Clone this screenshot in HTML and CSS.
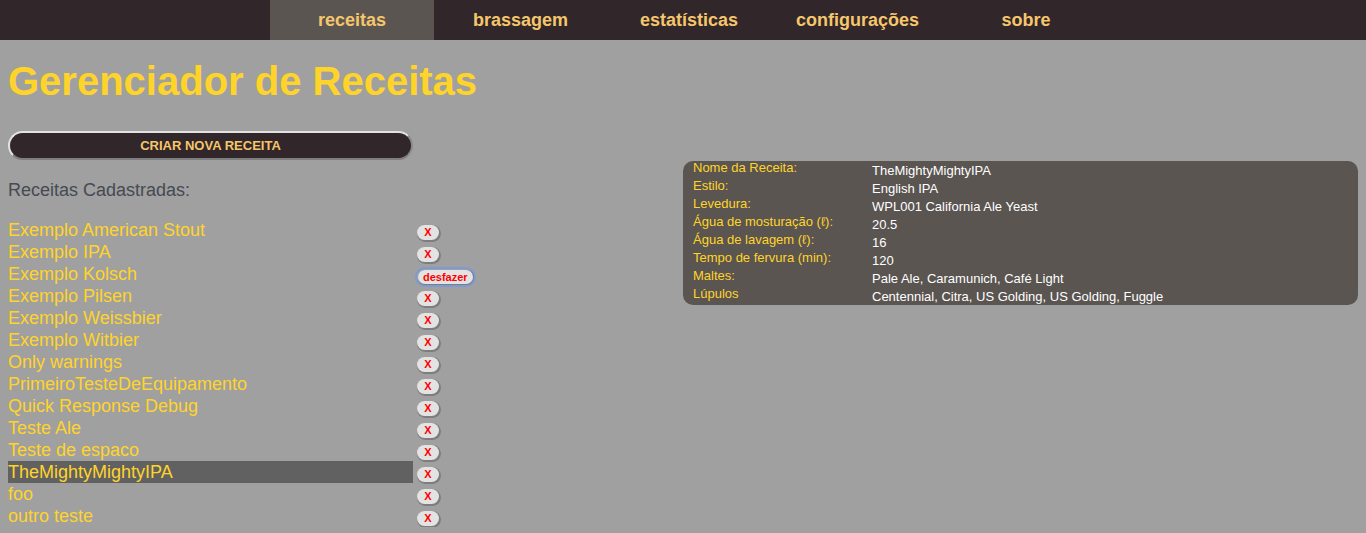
FILE: index.html
```html
<!DOCTYPE html>
<html lang="pt-BR">
<head>
<meta charset="utf-8">
<title>Gerenciador de Receitas</title>
<link rel="stylesheet" href="styles.css">
</head>
<body>
<nav class="topnav">
  <a class="nav-item active">receitas</a>
  <a class="nav-item">brassagem</a>
  <a class="nav-item">estatísticas</a>
  <a class="nav-item">configurações</a>
  <a class="nav-item">sobre</a>
</nav>
<main class="page">
  <h1 class="title">Gerenciador de Receitas</h1>
  <div class="columns">
    <section class="left">
      <button class="create-btn">CRIAR NOVA RECEITA</button>
      <h2 class="list-heading">Receitas Cadastradas:</h2>
      <ul class="recipe-list">
        <li class="recipe-row"><span class="recipe-name">Exemplo American Stout</span><button class="del-btn">X</button></li>
        <li class="recipe-row"><span class="recipe-name">Exemplo IPA</span><button class="del-btn">X</button></li>
        <li class="recipe-row"><span class="recipe-name">Exemplo Kolsch</span><button class="del-btn undo">desfazer</button></li>
        <li class="recipe-row"><span class="recipe-name">Exemplo Pilsen</span><button class="del-btn">X</button></li>
        <li class="recipe-row"><span class="recipe-name">Exemplo Weissbier</span><button class="del-btn">X</button></li>
        <li class="recipe-row"><span class="recipe-name">Exemplo Witbier</span><button class="del-btn">X</button></li>
        <li class="recipe-row"><span class="recipe-name">Only warnings</span><button class="del-btn">X</button></li>
        <li class="recipe-row"><span class="recipe-name">PrimeiroTesteDeEquipamento</span><button class="del-btn">X</button></li>
        <li class="recipe-row"><span class="recipe-name">Quick Response Debug</span><button class="del-btn">X</button></li>
        <li class="recipe-row"><span class="recipe-name">Teste Ale</span><button class="del-btn">X</button></li>
        <li class="recipe-row"><span class="recipe-name">Teste de espaco</span><button class="del-btn">X</button></li>
        <li class="recipe-row"><span class="recipe-name selected">TheMightyMightyIPA</span><button class="del-btn">X</button></li>
        <li class="recipe-row"><span class="recipe-name">foo</span><button class="del-btn">X</button></li>
        <li class="recipe-row"><span class="recipe-name">outro teste</span><button class="del-btn">X</button></li>
      </ul>
    </section>
    <section class="right">
      <div class="details">
        <div class="d-label">Nome da Receita:</div><div class="d-value">TheMightyMightyIPA</div>
        <div class="d-label">Estilo:</div><div class="d-value">English IPA</div>
        <div class="d-label">Levedura:</div><div class="d-value">WPL001 California Ale Yeast</div>
        <div class="d-label">Água de mosturação (ℓ):</div><div class="d-value">20.5</div>
        <div class="d-label">Água de lavagem (ℓ):</div><div class="d-value">16</div>
        <div class="d-label">Tempo de fervura (min):</div><div class="d-value">120</div>
        <div class="d-label">Maltes:</div><div class="d-value">Pale Ale, Caramunich, Café Light</div>
        <div class="d-label">Lúpulos</div><div class="d-value">Centennial, Citra, US Golding, US Golding, Fuggle</div>
      </div>
    </section>
  </div>
</main>
</body>
</html>
```

FILE: styles.css
```css
* { box-sizing: border-box; }

html, body {
  margin: 0;
  padding: 0;
  background: #a0a0a0;
  font-family: "Liberation Sans", Arial, sans-serif;
}

.topnav {
  height: 40px;
  background: #312629;
  display: flex;
  padding-left: 270px;
  gap: 4.5px;
}

.nav-item {
  width: 164px;
  height: 40px;
  line-height: 40px;
  text-align: center;
  font-weight: bold;
  font-size: 18px;
  color: #f5c66c;
  text-decoration: none;
}

.nav-item.active { background: #5a5551; }

.page { padding: 0 8px; }

.title {
  margin: 18px 0 0;
  font-size: 40px;
  line-height: 46px;
  font-weight: bold;
  color: #ffd42a;
}

.columns { display: flex; }

.left { width: 675px; }
.right { width: 675px; padding-top: 57px; }

.create-btn {
  display: block;
  margin-top: 27px;
  width: 405px;
  height: 29px;
  border-radius: 15px;
  background: #312629;
  border: 2px solid;
  border-color: #e2e2e2 #8a8a8a #7e7e7e #e2e2e2;
  color: #f5c66c;
  font-family: "Liberation Sans", Arial, sans-serif;
  font-weight: bold;
  font-size: 13px;
  padding: 0;
}

.list-heading {
  margin: 20px 0 0;
  font-size: 18px;
  line-height: 21px;
  font-weight: normal;
  color: #464a52;
}

.recipe-list {
  list-style: none;
  margin: 18px 0 0;
  padding: 0;
}

.recipe-row {
  display: flex;
  height: 22px;
}

.recipe-name {
  width: 405px;
  height: 22px;
  line-height: 22px;
  font-size: 18px;
  color: #ffd42a;
}

.recipe-name.selected { background: #616161; }

.del-btn {
  margin: 6px 0 0 4px;
  height: 15px;
  min-width: 22px;
  padding: 0 5px;
  border: none;
  border-radius: 8px;
  background: #e3e3e3;
  box-shadow: 1px 1px 0 1px #7d7d7d;
  color: #ff0000;
  font-family: "Liberation Sans", Arial, sans-serif;
  font-weight: bold;
  font-size: 11px;
  line-height: 15px;
}

.del-btn.undo {
  margin-top: 7px;
  height: 14px;
  outline: 2px solid #7b9ad6;
  outline-offset: 1px;
  line-height: 14px;
  margin-left: 5px;
}

.details {
  background: #5a5551;
  border-radius: 10px;
  display: grid;
  grid-template-columns: 179px 1fr;
  grid-auto-rows: 18px;
  padding-left: 10px;
  font-size: 13px;
}

.d-label {
  color: #ffd42a;
  line-height: 14px;
}

.d-value {
  color: #ffffff;
  line-height: 19px;
}
```
